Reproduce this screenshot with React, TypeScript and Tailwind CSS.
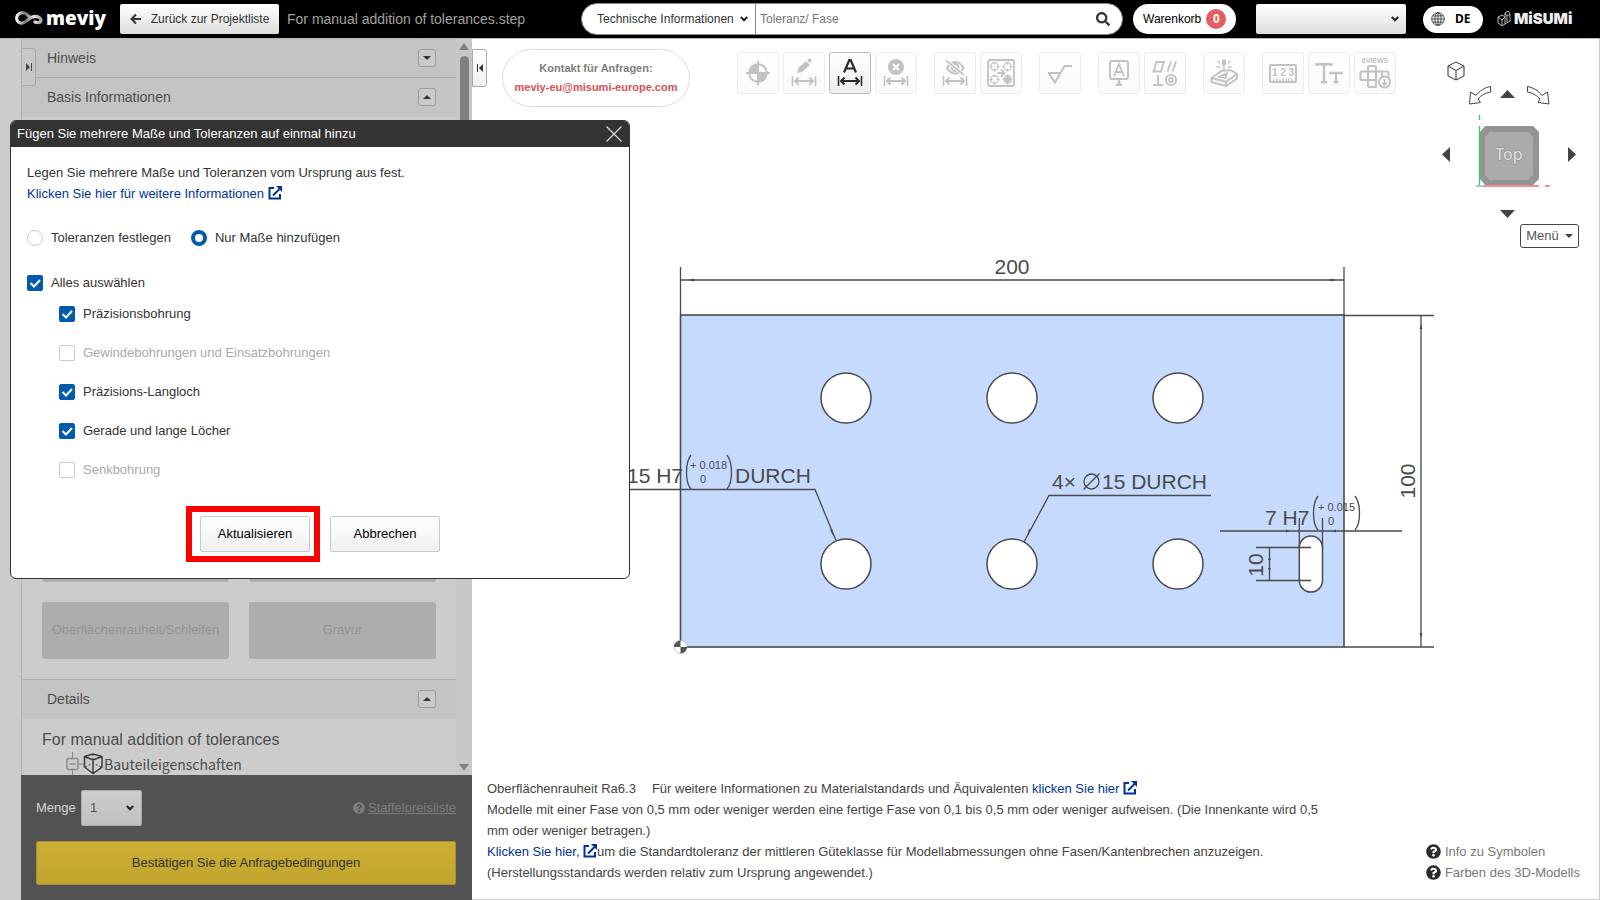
import type { ReactNode } from "react";
import { FaSearch, FaQuestionCircle } from "react-icons/fa";

const ARIAL = "font-['Liberation_Sans',Arial,sans-serif]";

function ExternalIcon() {
  return (
    <svg viewBox="0 0 14 14" className="inline-block h-[14px] w-[14px] align-[-2px]" fill="none" stroke="#003399" strokeWidth="2" aria-hidden="true">
      <path d="M6 2H1.5v10.5H12V8" />
      <path d="M5 9.5 11.5 3" />
      <path d="M8 0h6v6z" fill="#003399" stroke="none" />
    </svg>
  );
}

function Chevron() {
  return (
    <svg viewBox="0 0 8 6" className="pointer-events-none col-start-1 row-start-1 mr-[7px] h-[6px] w-2 justify-self-end" fill="none" stroke="#222" strokeWidth="2" aria-hidden="true">
      <path d="M.8 1 4 4.300 7.200 1" />
    </svg>
  );
}

function DimArrow() {
  return (
    <g>
      <path d="M9.5 24v10M32.500 24v10" strokeWidth="1.600" />
      <path d="M12 29h18M15.500 25.500 12 29l3.500 3.500M26.500 25.500 30 29l-3.500 3.500" strokeWidth="2" />
    </g>
  );
}

function ToolButton({ label, active, children }: { label: string; active?: boolean; children: ReactNode }) {
  return (
    <button
      type="button"
      aria-label={label}
      className={
        active
          ? "h-[42px] w-[42px] rounded-[3px] border border-[#bcbcbc] bg-linear-to-b from-white to-[#eeeeee] text-[#2b2b2b]"
          : "h-[42px] w-[42px] rounded-[3px] border border-[#ededed] bg-linear-to-b from-white to-[#fafafa] text-[#c2c2c2]"
      }
    >
      <svg viewBox="1 1 40 40" className="h-10 w-10" fill="none" stroke="currentColor" strokeWidth="2" aria-hidden="true">
        {children}
      </svg>
    </button>
  );
}

function Hole({ x, y }: { x: number; y: number }) {
  return (
    <g strokeWidth="1.200">
      <circle cx={x} cy={y} r="3.800" />
      <path d={`M${x - 5} ${y}h3M${x + 2} ${y}h3M${x} ${y - 5}v3M${x} ${y + 2}v3`} />
    </g>
  );
}

function Toolbar() {
  return (
    <div className="flex gap-[17px]">
      <div className="flex gap-1">
        <ToolButton label="Ursprung">
          <circle cx="21" cy="21" r="8.800" />
          <path d="M21 9v24M9 21h24" />
          <path d="M21 21V12a9 9 0 0 0-9 9zM21 21v9a9 9 0 0 0 9-9z" fill="currentColor" stroke="none" />
        </ToolButton>
        <ToolButton label="Maß bearbeiten">
          <path d="m14 21 1.500-5L23 9l4 4-8 7z" fill="currentColor" stroke="none" />
          <path d="m24 8 1.500-1a1.500 1.500 0 0 1 2.500 2.500l-1 1.500z" fill="currentColor" stroke="none" />
          <DimArrow />
        </ToolButton>
        <ToolButton label="Automatische Maße" active>
          <path d="M15 20.500 20.300 8h1.400L27 20.500M17 16.500h8" strokeWidth="2.200" />
          <DimArrow />
        </ToolButton>
        <ToolButton label="Maße löschen">
          <circle cx="21" cy="15" r="8" fill="currentColor" stroke="none" />
          <path d="m18 12 6 6M24 12l-6 6" stroke="#fff" />
          <DimArrow />
        </ToolButton>
      </div>
      <div className="flex gap-1">
        <ToolButton label="Maße ausblenden">
          <path d="M13 16c2-4 5-6 8-6s6.500 2 8.500 6c-2 3.500-5 5.500-8.500 5.500S15 19.500 13 16z" />
          <circle cx="21" cy="15.500" r="3.500" />
          <path d="M12 8.500 30 23" stroke="#fff" strokeWidth="3.500" />
          <path d="M12 8.500 30 23" strokeWidth="1.800" />
          <DimArrow />
        </ToolButton>
        <ToolButton label="Bohrungen gruppieren">
          <rect x="8" y="8" width="26" height="26" rx="2" strokeWidth="1.800" />
          <Hole x={14.5} y={14.5} />
          <Hole x={27.5} y={14.5} />
          <Hole x={14.5} y={27.5} />
          <Hole x={27.5} y={27.5} />
          <circle cx="27.500" cy="27.500" r="2" fill="currentColor" />
          <path d="M17.500 21h6M21 17.500l3.500 3.500-3.500 3.500" />
        </ToolButton>
      </div>
      <ToolButton label="Oberflächenrauheit">
        <path d="M9 21h12M9.500 21l6.500 9.500L25.500 14H33" />
      </ToolButton>
      <div className="flex gap-1">
        <ToolButton label="Bezug">
          <rect x="12" y="9" width="18" height="18" rx="2" />
          <path d="m16 24 5-12 5 12M18 20h6M21 27v4" strokeWidth="1.800" />
          <path d="M17 34h8l-4-5z" fill="currentColor" stroke="none" />
        </ToolButton>
        <ToolButton label="Form- und Lagetoleranz">
          <path d="M12.500 10H20l-3 9.500H9.500zM27 9.500l-3.500 10M32 9.500l-3.500 10M14 23v10M9 33h10" strokeWidth="1.800" />
          <circle cx="27" cy="28" r="5.200" strokeWidth="1.800" />
          <circle cx="27" cy="28" r="2" strokeWidth="1.800" />
        </ToolButton>
      </div>
      <ToolButton label="Gravur">
        <path d="M8.500 26 19 18.500h9.500l5.500 3.500v4.500L23 34l-14.500-4zM8.500 26 23 29.800 34 22M23 30v4" strokeLinejoin="round" />
        <path d="m15.500 25 8.500-4-1 5.500zM20 22.500l3 1.500" strokeWidth="1.400" />
        <path d="M21 7.500V13" strokeWidth="4" />
        <path d="m14.500 9 2.500 2.500M27.500 9 25 11.500M13.500 15h3.500M25 15h3.500M21 13v4.500" strokeWidth="1.500" />
      </ToolButton>
      <div className="flex gap-1">
        <ToolButton label="Messen">
          <rect x="8" y="13" width="26" height="17" rx="1" />
          <path d="M12 30v-3M15 30v-4M18 30v-3M21 30v-4M24 30v-3M27 30v-4M30 30v-3" strokeWidth="1.200" />
          <text x="21" y="24" textAnchor="middle" fontSize="10" fontWeight="700" fill="currentColor" stroke="none">1 2 3</text>
        </ToolButton>
        <ToolButton label="Textgröße">
          <path d="M8.500 14v-1.700h15V14M16 12v18M12.800 30.200h6.400" strokeWidth="2.400" />
          <path d="M22.500 22.500v-1.700h11v1.700M28 21v9M25.500 30.200h5" strokeWidth="2.200" />
        </ToolButton>
        <ToolButton label="6 Ansichten">
          <text x="21" y="11" textAnchor="middle" fontSize="7" fontWeight="700" fill="currentColor" stroke="none">6VIEWS</text>
          <rect x="14" y="14" width="8" height="21" rx="1" />
          <path d="M14 19.500H7.500a1 1 0 0 0-1 1V27a1 1 0 0 0 1 1H14M22 19.500h11.500a1 1 0 0 1 1 1V26M14 19.500h8M14 28h8M28 20v5" />
          <circle cx="30.500" cy="30" r="5.500" fill="#fff" />
          <path d="M30.500 27v5.500M28 30.500l2.500 2.500 2.500-2.500" strokeWidth="1.600" />
        </ToolButton>
      </div>
    </div>
  );
}

function Header() {
  return (
    <header className="flex h-[39px] shrink-0 items-center border-b border-[#b8b8b8] bg-black">
      <div className="flex w-[581px] shrink-0 items-center pl-[15px]">
        <a href="#start" className="flex w-[105px] items-center gap-[3px] text-white" aria-label="meviy">
          <svg viewBox="0 0 28 16" className="h-4 w-7" fill="none" aria-hidden="true">
            <defs>
              <linearGradient id="loop" x1="0" x2="1">
                <stop offset="0" stopColor="#f2f2f2" />
                <stop offset="0.35" stopColor="#77747a" />
                <stop offset="0.7" stopColor="#e4e4e4" />
                <stop offset="1" stopColor="#a5a3a8" />
              </linearGradient>
            </defs>
            <path d="M14 5.500C11 2 8.500 1.500 6.500 1.800 3 2.300 1.500 5 1.700 7.500c.3 3 2.500 5 5.300 4.600C12 11.500 14 5.500 20 5.300c3.500 0 6.200 1.700 6 4.200-.2 2.200-3.500 2.600-6 1.500" stroke="url(#loop)" strokeWidth="3.200" strokeLinecap="round" />
          </svg>
          <span className="pb-[3px] font-['Open_Sans',sans-serif] text-[19px] leading-[26px] font-extrabold">meviy</span>
        </a>
        <button type="button" className="flex h-[30px] w-[159px] items-center justify-center gap-[9px] rounded-[2px] bg-linear-to-b from-white to-[#dedede] text-[12px] text-[#333]">
          <svg viewBox="0 0 12 12" className="h-3 w-3" fill="none" stroke="currentColor" strokeWidth="2" aria-hidden="true">
            <path d="M11 6H2M6 1.500 1.500 6 6 10.500" />
          </svg>
          Zurück zur Projektliste
        </button>
        <span className="ml-2 text-[14px] text-[#a0a0a0]">For manual addition of tolerances.step</span>
      </div>
      <div className="flex h-8 min-w-0 flex-1 items-center overflow-hidden rounded-full border border-[#888] bg-white pr-3 pl-[15px]">
        <div className="grid w-[159px] shrink-0 items-center self-stretch border-r border-[#888]">
          <select aria-label="Suchbereich" className="col-start-1 row-start-1 w-full appearance-none bg-transparent text-[12px] text-[#333] outline-none">
            <option>Technische Informationen</option>
          </select>
          <Chevron />
        </div>
        <input aria-label="Suchbegriff" placeholder="Toleranz/ Fase" className="min-w-0 flex-1 pl-1 text-[12px] text-[#333] outline-none placeholder:text-[#757575]" />
        <button type="button" aria-label="Suchen" className="text-[#333]">
          <FaSearch className="h-[14px] w-[14px]" />
        </button>
      </div>
      <button type="button" className="ml-[10px] flex h-[30px] w-[103px] items-center gap-[5px] rounded-full bg-white pl-[10px] text-[12px] text-black">
        Warenkorb
        <span className="flex h-5 w-5 shrink-0 items-center justify-center rounded-full bg-[#e06060] text-[12px] font-bold text-white">0</span>
      </button>
      <div className="ml-5 grid h-[30px] w-[150px] shrink-0 items-center rounded-[2px] bg-linear-to-b from-white to-[#dedede]">
        <select aria-label="Benutzerkonto" className="col-start-1 row-start-1 h-full w-full appearance-none bg-transparent text-[12px] outline-none" />
        <Chevron />
      </div>
      <button type="button" className="ml-[17px] flex h-[27px] w-[60px] shrink-0 items-center gap-[10px] rounded-full bg-white pl-2 font-['Noto_Sans',sans-serif] text-[12px] font-bold text-black">
        <svg viewBox="0 0 16 16" className="h-[14px] w-[14px]" fill="none" stroke="#333" strokeWidth="1" aria-hidden="true">
          <circle cx="8" cy="8" r="7.200" />
          <ellipse cx="8" cy="8" rx="3.500" ry="7.200" />
          <path d="M8 1v14M1 8h14M2 4.500h12M2 11.500h12" />
        </svg>
        DE
      </button>
      <a href="#misumi" className="mr-[29px] ml-[14px] flex w-[74px] shrink-0 items-center gap-[3px] font-['Inter',sans-serif] text-[15px] font-black text-[#eee]">
        <svg viewBox="0 0 14 18" className="h-[18px] w-[14px] shrink-0" fill="none" stroke="#bbb" strokeWidth="1" aria-hidden="true">
          <path d="M1 7l4-2 3 2v7l-3 2-4-3zM1 7l4 3v6M5 10l3-3M8 7V3l3-2 2 3v7l-5 3M8 3l2 3 3-2M10 6v6" />
        </svg>
        <span>MiSUMi</span>
      </a>
    </header>
  );
}

function SectionHeader({ title, open }: { title: string; open?: boolean }) {
  return (
    <div className={open ? "flex h-[39px] shrink-0 items-center justify-between bg-[#c4c4c4] pr-5 pb-px pl-[25px] text-[14px] text-[#4d4d4d]" : "flex h-[39px] shrink-0 items-center justify-between border-b border-[#adadad] bg-[#c4c4c4] pr-5 pl-[25px] text-[14px] text-[#4d4d4d]"}>
      <h2>{title}</h2>
      <button type="button" aria-label={title} aria-expanded={!!open} className="flex h-[18px] w-[18px] items-center justify-center rounded-[3px] border border-[#9c9c9c] bg-[#cacaca]">
        <svg viewBox="0 0 8 4" className="h-1 w-2" fill="#333" aria-hidden="true">
          <path d={open ? "M0 4 4 0l4 4z" : "M0 0h8L4 4z"} />
        </svg>
      </button>
    </div>
  );
}

function Sidebar() {
  return (
    <aside className="flex w-[472px] shrink-0 bg-[#ccc] pl-[21px]">
      <div className="relative flex min-w-0 flex-1 flex-col">
        <button type="button" aria-label="Leiste ausklappen" className="absolute top-[9px] left-0 z-10 flex h-[38px] w-[15px] items-center justify-center rounded-r-[3px] border border-[#a6a6a6] bg-[#c8c8c8]">
          <svg viewBox="0 0 8 8" className="h-2 w-2" fill="#444" aria-hidden="true">
            <path d="M1 0v8l4-4zM6 0h1v8H6z" />
          </svg>
        </button>
        <div className="flex min-h-0 flex-1">
          <div className="flex min-w-0 flex-1 flex-col border-l border-[#b0b0b0]">
            <SectionHeader title="Hinweis" />
            <SectionHeader title="Basis Informationen" open />
            <div className="flex flex-1 flex-col justify-end border-b border-[#adadad] px-5 pb-5">
              <div className="grid grid-cols-2 gap-5 text-[13px] text-[#929292]">
                <div className="h-[57px] rounded-[3px] bg-[#adadad]" />
                <div className="h-[57px] rounded-[3px] bg-[#adadad]" />
                <button type="button" disabled className="h-[57px] rounded-[3px] bg-[#adadad] pb-[2px]">Oberflächenrauheit/Schleifen</button>
                <button type="button" disabled className="h-[57px] rounded-[3px] bg-[#adadad] pb-[2px]">Gravur</button>
              </div>
            </div>
            <SectionHeader title="Details" open />
            <div className="h-[56px] shrink-0 overflow-hidden pt-[9px] pl-5 text-[16px] leading-6 text-[#4d4d4d]">
              <p>For manual addition of tolerances</p>
              <div className="flex items-center pl-6">
                <svg viewBox="0 0 38 24" className="h-6 w-[38px]" fill="none" stroke="#8a8a8a" aria-hidden="true">
                  <path d="M6.500 0v6M6.500 18v6M12 12h6" />
                  <rect x="1" y="6.500" width="11" height="11" rx="1.500" strokeWidth="1.400" />
                  <path d="M3.500 12h6" strokeWidth="1.500" />
                  <path d="M18.500 4.500 27 2l9 2.500V15l-9 6.500-8.500-6.500zM18.500 4.500 27 8l9-3.500M27 8v13.500" stroke="#3c3c3c" strokeWidth="1.500" />
                  <path d="m19 15 8-4 8 4M27 2v6" stroke="#3c3c3c" strokeDasharray="2 2" />
                </svg>
                <span className="font-['Noto_Sans_CJK_JP',sans-serif] text-[14px]">Bauteileigenschaften</span>
              </div>
            </div>
          </div>
          <div className="flex w-4 shrink-0 flex-col items-center justify-between bg-[#c8c8c8] py-1" aria-hidden="true">
            <div className="flex flex-col items-center gap-[6px]">
              <svg viewBox="0 0 10 7" className="h-[7px] w-[10px]" fill="#808080"><path d="M0 7 5 0l5 7z" /></svg>
              <div className="h-[220px] w-[9px] rounded-full bg-[#808080]" />
            </div>
            <svg viewBox="0 0 10 7" className="h-[7px] w-[10px]" fill="#808080"><path d="M0 0h10L5 7z" /></svg>
          </div>
        </div>
        <div className="shrink-0 bg-[#525252] p-[15px] pr-4">
          <div className="flex h-9 items-center">
            <label htmlFor="menge" className="w-[45px] text-[13px] text-[#d6d6d6]">Menge</label>
            <div className="grid h-9 w-[61px] items-center rounded-[2px] border border-[#aaa] bg-linear-to-b from-[#cdcdcd] to-[#c0c0c0]">
              <select id="menge" className="col-start-1 row-start-1 w-full appearance-none bg-transparent pl-2 text-[13px] text-[#4d4d4d] outline-none">
                <option>1</option>
              </select>
              <Chevron />
            </div>
            <a href="#staffelpreise" className="ml-auto flex items-center gap-[3px] text-[13px] text-[#7d7d7d]">
              <FaQuestionCircle className="h-3 w-3" />
              <span className="underline">Staffelpreisliste</span>
            </a>
          </div>
          <button type="button" className="mt-[15px] h-11 w-full rounded-[2px] border border-[#a48f34] bg-linear-to-b from-[#ccae33] to-[#c2a52f] text-[13px] text-[#333]">
            Bestätigen Sie die Anfragebedingungen
          </button>
        </div>
      </div>
    </aside>
  );
}

const HOLES = [
  [846, 398], [1012, 398], [1178, 398],
  [846, 564], [1012, 564], [1178, 564],
];

function Drawing() {
  return (
    <svg viewBox="472 220 1127 440" className="w-full font-['Liberation_Sans',Arial,sans-serif]" fill="none" stroke="#4a4a4a" strokeWidth="1.300" role="img" aria-label="Zeichnung der Platte">
      <rect x="680.500" y="315" width="663.500" height="332" fill="#c6dafe" strokeWidth="1.600" />
      {HOLES.map(([x, y]) => (
        <circle key={`${x}-${y}`} cx={x} cy={y} r="25" fill="#fff" strokeWidth="1.500" />
      ))}
      <rect x="1299.300" y="536" width="23.200" height="56" rx="11.600" fill="#fff" strokeWidth="1.500" />
      <path d="M680.500 267v48M1344 267v48M680.500 280h663.500M1344 315.500h90M1344 647h90M1421 315.500V647" />
      <path d="M625 489.500h190l21 51M1211 495.500h-162l-25 46.500" />
      <path d="M1220 531h182M1299.300 518v30M1322.500 518v30M1256 547.500h55M1256 580.500h55M1269.500 547.500v33" />
      <path d="M691 455c-6 8-6 27 0 34M727 455c6 8 6 27 0 34M1318 496c-6 8-6 27 0 34M1355 496c6 8 6 27 0 34" />
      <g fill="#4a4a4a" stroke="none">
        <path d="m689 280 5-1.500v3zM1335.500 280l-5-1.500v3zM1421 324l-1.500 5h3zM1421 638l-1.500-5h3zM1269.500 556l-1.500 4h3zM1269.500 572l-1.500-4h3zM1290 531l-4-1.500v3zM1332 531l4-1.500v3zM834 537l-4-7 2-1zM1027 537l4-7-2-1z" />
        <circle cx="680.500" cy="647" r="6.500" fill="#fff" stroke="#999" strokeWidth="0.500" />
        <path d="M680.500 647v-6.500a6.500 6.500 0 0 0-6.500 6.500zM680.500 647v6.500a6.500 6.500 0 0 0 6.500-6.500z" fill="#555" />
        <g fontSize="21">
          <text x="1012" y="274" textAnchor="middle">200</text>
          <text x="683" y="483" textAnchor="end">15 H7</text>
          <text x="735" y="483">DURCH</text>
          <text x="1052" y="489">4×</text>
          <text x="1102" y="489">15 DURCH</text>
          <text x="1265" y="525">7 H7</text>
          <text transform="translate(1415 481) rotate(-90)" textAnchor="middle">100</text>
          <text transform="translate(1263 565) rotate(-90)" textAnchor="middle">10</text>
        </g>
        <g fontSize="11">
          <text x="690" y="469">+ 0.018</text>
          <text x="700" y="483">0</text>
          <text x="1318" y="511">+ 0.015</text>
          <text x="1328" y="525">0</text>
        </g>
      </g>
      <g>
        <circle cx="1091.500" cy="481.500" r="7.500" />
        <path d="m1083.500 489.500 16-16" />
      </g>
    </svg>
  );
}

function ViewCube() {
  return (
    <div className="absolute top-[17px] right-[19px] flex flex-col items-end gap-1">
      <svg viewBox="1436 56 144 164" className="h-[164px] w-[144px] font-['Noto_Sans',sans-serif]" fill="none" role="img" aria-label="Ansichtswürfel">
        <path d="m1456 62 8 4v10l-8 4-8-4V66zM1448 66l8 4.500 8-4.500M1456 70.500V80" stroke="#333" />
        <path d="M1490.500 86.500c-6 1-11 4.500-14.500 9l-5.500-3.500-1 12 11-1.500-2.500-3.500c3-3.500 7-6 12.500-7z" stroke="#444" />
        <path d="M1527.500 86.500c6 1 11 4.500 14.500 9l5.500-3.500 1.500 12-11-1.500 2-3.500c-3-3.500-7-6-12.500-7z" stroke="#444" />
        <path d="m1500 98 7.500-8 7.500 8zM1500 210h15l-7.500 8zM1450 147v15l-8-7.500zM1568 147v15l8-7.500z" fill="#444" />
        <path d="M1485 126h48l6 6v47l-6 6h-48l-5-6v-47z" fill="#949494" />
        <path d="M1490 132h38l5 5v38l-5 5h-38l-5-5v-38z" fill="#ababab" />
        <path d="M1479.500 115v5M1479.500 126v59.500" stroke="#3ecf5b" strokeWidth="1.400" />
        <path d="M1483 186h56M1545 186h5" stroke="#f26a6a" strokeWidth="1.400" />
        <path d="M1476 186h7" stroke="#7db4ec" strokeWidth="1.400" />
        <text x="1509" y="160" textAnchor="middle" fontSize="16" fill="#e4e4e4" stroke="#8a8a8a" strokeWidth="1" paintOrder="stroke">Top</text>
      </svg>
      <button type="button" className="mr-px flex h-6 w-[59px] items-center justify-center gap-[6px] rounded-[3px] border border-[#444] bg-white text-[13px] text-[#555]">
        Menü
        <svg viewBox="0 0 8 4" className="h-1 w-2" fill="#444" aria-hidden="true"><path d="M0 0h8L4 4z" /></svg>
      </button>
    </div>
  );
}

function CheckRow({ label, checked, disabled }: { label: string; checked?: boolean; disabled?: boolean }) {
  return (
    <label className={disabled ? "flex h-4 items-center gap-2 text-[#aaa]" : "flex h-4 items-center gap-2"}>
      <span className="grid h-4 w-4">
        <input
          type="checkbox"
          defaultChecked={checked}
          disabled={disabled}
          className="peer col-start-1 row-start-1 h-4 w-4 appearance-none rounded-[2px] border border-[#ccc] bg-white checked:border-[#005bac] checked:bg-[#005bac]"
        />
        <svg viewBox="0 0 16 16" className="pointer-events-none invisible col-start-1 row-start-1 h-4 w-4 peer-checked:visible" fill="none" stroke="#fff" strokeWidth="2" aria-hidden="true">
          <path d="m3.500 8 3.500 3.500L13 5" />
        </svg>
      </span>
      {label}
    </label>
  );
}

function RadioRow({ label, checked }: { label: string; checked?: boolean }) {
  return (
    <label className="flex h-4 items-center gap-2">
      <input
        type="radio"
        name="modus"
        defaultChecked={checked}
        className="h-4 w-4 appearance-none rounded-full border border-[#ccc] bg-white checked:border-[4px] checked:border-[#005bac]"
      />
      {label}
    </label>
  );
}

function DimensionDialog() {
  const button = "h-9 w-[110px] rounded-[2px] border border-[#c8c8c8] bg-linear-to-b from-white to-[#f0f0f0] text-black";
  return (
    <section role="dialog" aria-labelledby="dialog-title" className="absolute top-[120px] left-[10px] z-20 w-[620px] overflow-hidden rounded-md border border-[#333] bg-white text-[13px] text-[#333]">
      <div className="flex h-[26px] items-center justify-between bg-[#333] pr-[7px] pl-[6px] text-white">
        <h1 id="dialog-title">Fügen Sie mehrere Maße und Toleranzen auf einmal hinzu</h1>
        <button type="button" aria-label="Schließen">
          <svg viewBox="0 0 16 16" className="h-4 w-4" fill="none" stroke="#ddd" strokeWidth="1.200" aria-hidden="true">
            <path d="m.5.5 15 15M15.500.5l-15 15" />
          </svg>
        </button>
      </div>
      <div className="px-4 pt-[15px] pb-4">
        <p className="leading-[21px]">Legen Sie mehrere Maße und Toleranzen vom Ursprung aus fest.</p>
        <p className="leading-[21px]">
          <a href="#informationen" className="text-[#003399]">Klicken Sie hier für weitere Informationen <ExternalIcon /></a>
        </p>
        <div className="mt-[26px] flex gap-5">
          <RadioRow label="Toleranzen festlegen" />
          <RadioRow label="Nur Maße hinzufügen" checked />
        </div>
        <div className="mt-[29px]">
          <CheckRow label="Alles auswählen" checked />
          <div className="mt-[15px] flex flex-col gap-[23px] pl-8">
            <CheckRow label="Präzisionsbohrung" checked />
            <CheckRow label="Gewindebohrungen und Einsatzbohrungen" disabled />
            <CheckRow label="Präzisions-Langloch" checked />
            <CheckRow label="Gerade und lange Löcher" checked />
            <CheckRow label="Senkbohrung" disabled />
          </div>
        </div>
        <div className="mt-7 flex items-center justify-center gap-[10px] pr-[14px]">
          <div className="border-[6px] border-[#ff0000] py-1 pr-1 pl-2">
            <button type="button" className={button}>Aktualisieren</button>
          </div>
          <button type="button" className={button}>Abbrechen</button>
        </div>
      </div>
    </section>
  );
}

function Notes() {
  return (
    <footer className="mt-auto flex items-end justify-between pr-[19px] pb-4 pl-[15px] text-[13px] leading-[21px] text-[#444]">
      <div className="w-[840px]">
        <p>
          <span className="mr-4">Oberflächenrauheit Ra6.3</span>
          Für weitere Informationen zu Materialstandards und Äquivalenten{" "}
          <a href="#material" className="text-[#003399]">klicken Sie hier <ExternalIcon /></a>
        </p>
        <p>Modelle mit einer Fase von 0,5 mm oder weniger werden eine fertige Fase von 0,1 bis 0,5 mm oder weniger aufweisen. (Die Innenkante wird 0,5 mm oder weniger betragen.)</p>
        <p>
          <a href="#toleranz" className="text-[#003399]">Klicken Sie hier, <ExternalIcon /></a>um die Standardtoleranz der mittleren Güteklasse für Modellabmessungen ohne Fasen/Kantenbrechen anzuzeigen.
        </p>
        <p>(Herstellungsstandards werden relativ zum Ursprung angewendet.)</p>
      </div>
      <div className="text-[#777]">
        <a href="#symbole" className="flex items-center gap-1"><FaQuestionCircle className="h-[15px] w-[15px] text-[#2b2b2b]" />Info zu Symbolen</a>
        <a href="#farben" className="flex items-center gap-1"><FaQuestionCircle className="h-[15px] w-[15px] text-[#2b2b2b]" />Farben des 3D-Modells</a>
      </div>
    </footer>
  );
}

export default function App() {
  return (
    <div className={`relative flex min-h-screen flex-col bg-white ${ARIAL}`}>
      <Header />
      <div className="flex flex-1">
        <Sidebar />
        <main className="relative flex min-w-0 flex-1 flex-col border-r border-b border-[#ccc]">
          <div className="flex pt-[10px]">
            <button type="button" aria-label="Leiste einklappen" className="flex h-[38px] w-[15px] shrink-0 items-center justify-center rounded-r-[3px] border border-[#aaa] bg-linear-to-b from-white to-[#f0f0f0]">
              <svg viewBox="0 0 8 8" className="h-2 w-2" fill="#333" aria-hidden="true">
                <path d="M7 0v8L3 4zM1 0h1v8H1z" />
              </svg>
            </button>
            <a href="mailto:meviy-eu@misumi-europe.com" className="ml-[15px] flex h-[58px] w-[188px] shrink-0 flex-col items-center justify-center rounded-full border border-[#ddd] text-[11px] leading-[19px] font-bold whitespace-nowrap text-[#808080]">
              <span>Kontakt für Anfragen:</span>
              <span className="text-[#d9505a]">meviy-eu@misumi-europe.com</span>
            </a>
            <div className="ml-[47px] pt-[3px]">
              <Toolbar />
            </div>
          </div>
          <div className="mt-[113px]">
            <Drawing />
          </div>
          <ViewCube />
          <Notes />
        </main>
      </div>
      <DimensionDialog />
    </div>
  );
}
